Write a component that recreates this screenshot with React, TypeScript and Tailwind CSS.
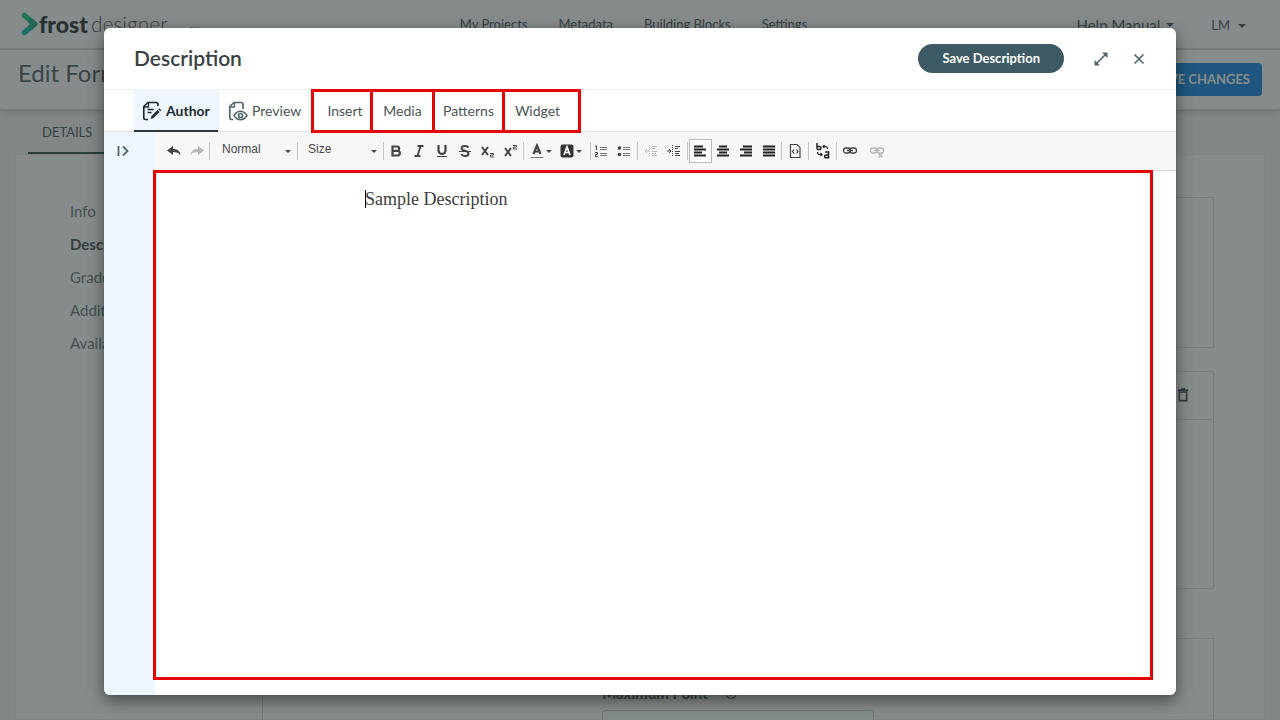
import { useState } from 'react';
import type { ReactNode } from 'react';

const NAV = ['My Projects', 'Metadata', 'Building Blocks', 'Settings'];
const SIDE = ['Info', 'Description', 'Grades', 'Additional', 'Availability'];

function Caret({ className = '' }: { className?: string }) {
  return (
    <svg viewBox="0 0 8 4" className={`shrink-0 fill-current ${className}`} aria-hidden="true">
      <path d="M0 0h8L4 4z" />
    </svg>
  );
}

/* ---------- page behind the dialog ---------- */

function Logo() {
  return (
    <a href="#home" className="flex items-center text-[#5c6467]" aria-label="frost designer">
      <svg viewBox="0 0 18 24" className="h-6 w-[18px]" aria-hidden="true">
        <path d="M3.5 3.5 13.5 12" stroke="#3fd08d" strokeWidth="5.5" strokeLinecap="round" />
        <path d="M13.5 12 3.5 20.5" stroke="#2fc3bd" strokeWidth="5.5" strokeLinecap="round" />
        <path d="m9 8.2 4.5 3.8L9 15.8" fill="none" stroke="#35b490" strokeWidth="5.5" strokeLinejoin="round" />
      </svg>
      <span className="text-[23px] leading-6 font-black text-[#42494c]">frost</span>
      <span className="ml-[3px] text-[21px] leading-6 font-light">designer</span>
    </a>
  );
}

function TopBar() {
  return (
    <header className="flex h-[50px] shrink-0 items-center border-b-2 border-[#dadcdc] bg-white pr-[34px] pl-[21px] text-[#5d6a70]">
      <div className="flex flex-1 items-center">
        <Logo />
        <span className="ml-[22px] text-sm">...</span>
      </div>
      <nav className="flex gap-[31px] pt-[2px] text-[13px]">
        {NAV.map((n) => (
          <a key={n} href="#nav">{n}</a>
        ))}
      </nav>
      <div className="flex flex-1 items-center justify-end">
        <button className="flex items-center gap-[6px] pt-[2px] text-[15px]">
          Help Manual <Caret className="h-1 w-2" />
        </button>
        <button className="ml-[37px] flex items-center gap-2 pt-1 text-[13px]">
          LM <Caret className="h-1 w-2" />
        </button>
      </div>
    </header>
  );
}

function BackPage() {
  return (
    <div className="flex h-screen flex-col overflow-hidden bg-[#f3f5f5]">
      <TopBar />
      <div className="flex h-[60px] shrink-0 items-center justify-between border-b border-[#d8dada] bg-white pr-[18px] pl-[18px] shadow-md">
        <h1 className="pb-[14px] text-2xl text-[#657074]">Edit Form</h1>
        <button className="h-[33px] rounded-sm bg-[#3192e6] px-3 text-[13px] font-bold text-white">SAVE CHANGES</button>
      </div>
      <div className="flex h-11 shrink-0 pl-7">
        <button className="h-full border-b-2 border-[#4e5c5f] px-[14px] pt-1 text-[13px] text-[#5d6a70]">DETAILS</button>
        <div className="w-20 border-b-2 border-[#4e5c5f]" />
      </div>
      <div className="mx-[15px] flex min-h-0 flex-1 border border-[#eceeee] bg-white">
        <aside className="w-[246px] shrink-0 pt-10 pl-[54px]">
          <ul className="text-[15px] text-[#7a8688]">
            {SIDE.map((s) => (
              <li key={s} className="flex h-[33px] items-center">
                <a href="#section" className={s === 'Description' ? 'font-bold text-[#5c6668]' : ''}>{s}</a>
              </li>
            ))}
          </ul>
        </aside>
        <div className="flex-1 pt-[42px] pr-[50px]">
          <div className="h-[151px] border border-[#dde0e0]" />
          <div className="mt-[23px] h-[218px] border border-[#dde0e0]">
            <div className="flex h-12 items-center justify-end border-b border-[#dde0e0] pr-6">
              <button aria-label="Delete" className="text-[#4e6066]">
                <svg viewBox="0 0 12 14" className="mb-[2px] h-[14px] w-3" fill="none" stroke="currentColor" strokeWidth="1.6">
                  <path d="M2.3 4h7.4v8.6H2.3zM1 2.1h10M4 1h4" />
                </svg>
              </button>
            </div>
          </div>
          <div className="mt-[49px] h-[218px] border border-[#dde0e0] pt-11 pl-[339px]">
            <label htmlFor="max-point" className="flex h-5 items-center text-[15px] font-bold text-[#5c6a6c]">
              Maximum Point
              <svg viewBox="0 0 14 14" className="ml-4 h-[14px] w-[14px]" fill="none" stroke="currentColor" strokeWidth="1.2" aria-hidden="true">
                <circle cx="7" cy="7" r="5.5" />
                <path d="M7 4v4M7 9v1" />
              </svg>
            </label>
            <input id="max-point" className="mt-[7px] h-9 w-[272px] rounded border border-[#cbd0d0] bg-[#f9fdfb]" />
          </div>
        </div>
      </div>
    </div>
  );
}

/* ---------- toolbar ---------- */

function Icon({ children, className = '' }: { children: ReactNode; className?: string }) {
  return (
    <svg viewBox="0 0 16 16" className={`h-4 w-4 shrink-0 ${className}`} fill="none" stroke="currentColor" aria-hidden="true">
      {children}
    </svg>
  );
}

function Tool({ label, off, active, children }: { label: string; off?: boolean; active?: boolean; children: ReactNode }) {
  return (
    <button
      aria-label={label}
      disabled={off}
      className={`flex h-6 w-[23px] shrink-0 items-center justify-center ${
        active ? 'border border-[#bcbcbc] bg-white' : ''
      } ${off ? 'opacity-35' : ''}`}
    >
      {children}
    </button>
  );
}

function Group({ className = '', children }: { className?: string; children: ReactNode }) {
  return <div className={`flex h-[18px] shrink-0 items-center justify-center border-r border-[#c4c4c4] ${className}`}>{children}</div>;
}

function ColorTool({ label, children }: { label: string; children: ReactNode }) {
  return (
    <button aria-label={label} className="flex h-6 w-[30px] items-center gap-px pl-[2px]">
      {children}
      <Caret className="h-[3px] w-[6px]" />
    </button>
  );
}

function ToolSelect({ label, value }: { label: string; value: string }) {
  return (
    <div className="flex w-full items-center pr-[6px] pl-[10px]">
      <select aria-label={label} className="mb-1 w-full appearance-none bg-transparent font-['Liberation_Sans',Arial,sans-serif] text-xs text-[#484848]">
        <option>{value}</option>
      </select>
      <Caret className="h-[3px] w-[6px]" />
    </div>
  );
}

const ALIGN = [
  { label: 'Align left', d: 'M2 3.5h9M2 6.5h12M2 9.5h8M2 12.5h12' },
  { label: 'Center', d: 'M4 3.5h8M2 6.5h12M4 9.5h8M2 12.5h12' },
  { label: 'Align right', d: 'M5 3.5h9M2 6.5h12M6 9.5h8M2 12.5h12' },
  { label: 'Justify', d: 'M2 3.5h12M2 6.5h12M2 9.5h12M2 12.5h12' },
];

const CHAIN = (
  <>
    <rect x="1.5" y="5" width="7" height="5" rx="2.5" strokeWidth="1.3" />
    <rect x="7.5" y="5" width="7" height="5" rx="2.5" strokeWidth="1.3" />
    <path d="M5 7.5h6" strokeWidth="1.3" />
  </>
);

function Toolbar() {
  return (
    <div role="toolbar" aria-label="Formatting" className="flex h-[39px] items-center border-b border-[#d6d6d6] bg-[#f7f7f7] pl-[7px] text-[#444]">
      <Group className="w-12">
        <Tool label="Undo">
          <Icon><path d="M1 7.5 7 3v3c4.5 0 7 2 7.5 6.5C13 10 11 9 7 9v3z" fill="currentColor" stroke="none" /></Icon>
        </Tool>
        <Tool label="Redo" off>
          <Icon><path d="M15 7.5 9 3v3c-4.5 0-7 2-7.5 6.5C3 10 5 9 9 9v3z" fill="currentColor" stroke="none" /></Icon>
        </Tool>
      </Group>
      <Group className="w-[88px] pl-[2px]"><ToolSelect label="Paragraph format" value="Normal" /></Group>
      <Group className="w-[86px]"><ToolSelect label="Font size" value="Size" /></Group>
      <Group className="w-[140px] pr-px">
        <Tool label="Bold">
          <Icon><path d="M4.5 3.5H9a2.1 2.1 0 0 1 0 4.3H4.5zM4.5 7.8h5a2.3 2.3 0 0 1 0 4.7h-5z" strokeWidth="2.2" /></Icon>
        </Tool>
        <Tool label="Italic">
          <Icon><path d="M6.5 3h6M3.5 13h6M9.6 3 6.4 13" strokeWidth="1.9" /></Icon>
        </Tool>
        <Tool label="Underline">
          <Icon><path d="M4.5 2v5.500a3.500 3.500 0 0 0 7 0V2" strokeWidth="2.2" /><path d="M3 13.500h10" /></Icon>
        </Tool>
        <Tool label="Strikethrough">
          <Icon>
            <path d="M11.5 4.6C10.800 3.400 9.500 3 8 3 6 3 4.700 4 4.700 5.400 4.700 8.500 11.500 7 11.500 10.500c0 1.600-1.500 2.500-3.500 2.500-1.700 0-3-.6-3.700-1.900" strokeWidth="2" />
            <path d="M2 8.500h12" strokeWidth="1.2" />
          </Icon>
        </Tool>
        <Tool label="Subscript">
          <Icon><path d="m2 4 6 8M8 4l-6 8" strokeWidth="2" /><path d="M10 10.500h3.500v1.500h-3v2H14" /></Icon>
        </Tool>
        <Tool label="Superscript">
          <Icon><path d="m2 5 6 8M8 5l-6 8" strokeWidth="2" /><path d="M10 2.500h3.500V4h-3v2H14" /></Icon>
        </Tool>
      </Group>
      <Group className="w-[67px]">
        <ColorTool label="Text colour">
          <Icon><path d="m4.500 11 3.500-8.500L11.500 11M6 8.500h4" strokeWidth="2.2" /><path d="M1.500 14.500h13" stroke="#777" /></Icon>
        </ColorTool>
        <ColorTool label="Background colour">
          <Icon>
            <rect x="1.500" y="1.500" width="13" height="13" rx="2" fill="#333" stroke="none" />
            <path d="m5 12 3-8 3 8M6 9.500h4" stroke="#fff" strokeWidth="1.7" />
          </Icon>
        </ColorTool>
      </Group>
      <Group className="w-[47px] pr-[3px]">
        <Tool label="Numbered list">
          <Icon><path d="M7 4.500h7M7 6.500h7M7 10.500h7M7 12.500h7" stroke="#777" /><path d="M2 3h1.500v4M2 9.500h2.500v2H2.500v2h2.500" /></Icon>
        </Tool>
        <Tool label="Bulleted list">
          <Icon><path d="M7 4.500h7M7 6.500h7M7 10.500h7M7 12.500h7" stroke="#777" /><g fill="currentColor" stroke="none"><circle cx="3.500" cy="5" r="1.800" /><circle cx="3.500" cy="11.500" r="1.800" /></g></Icon>
        </Tool>
      </Group>
      <Group className="w-[50px]">
        <Tool label="Decrease indent" off>
          <Icon><path d="M6.500 2v12" strokeDasharray="1 1" /><path d="M9 3.500h5M9 5.500h3M9 8.500h5M9 10.500h4M9 12.500h5M2 8h4M4 6 2 8l2 2" /></Icon>
        </Tool>
        <Tool label="Increase indent">
          <Icon><path d="M6.500 2v12" strokeDasharray="1 1" /><path d="M9 3.500h5M9 5.500h3M9 8.500h5M9 10.500h4M9 12.500h5M1 8h4M3 6l2 2-2 2" /></Icon>
        </Tool>
      </Group>
      <Group className="w-[94px]">
        {ALIGN.map((a, i) => (
          <Tool key={a.label} label={a.label} active={i === 0}>
            <Icon className="text-[#222]"><path d={a.d} strokeWidth="2" /></Icon>
          </Tool>
        ))}
      </Group>
      <Group className="w-[27px]">
        <Tool label="Source">
          <Icon><path d="M3.500 1.500H10l3 3v10H3.500z" strokeWidth="1.2" /><path d="M7 6.500 5.500 8.500 7 10.500M9.500 6.500l1.500 2-1.500 2" strokeWidth="1.2" /></Icon>
        </Tool>
      </Group>
      <Group className="w-[28px]">
        <Tool label="Translate">
          <Icon className="text-[#222]">
            <path d="M2 0v6.500M2 3.500h2.500a1.500 1.500 0 0 1 0 3H2" strokeWidth="1.5" />
            <path d="M10 9h3.500v6.500M13.500 12H11a1.400 1.400 0 0 0 0 2.800h2.500" strokeWidth="1.6" />
            <path d="M8 3.500h2.500q2 0 2 2.500M9.500 2 8 3.500 9.500 5M2.500 9q0 2.500 2 2.500H7M5.500 10 7 11.500 5.500 13" strokeWidth="1.2" />
          </Icon>
        </Tool>
      </Group>
      <div className="flex items-center gap-1 pl-px">
        <Tool label="Link"><Icon>{CHAIN}</Icon></Tool>
        <Tool label="Unlink" off><Icon>{CHAIN}<path d="m9.500 10.500 4 4M13.500 10.500l-4 4" strokeWidth="1.4" /></Icon></Tool>
      </div>
    </div>
  );
}

/* ---------- dialog ---------- */

function Tabs() {
  return (
    <div className="flex h-[42px] shrink-0 items-stretch border-b border-[#dfe3e5] pl-[30px] text-sm text-[#4b5558]">
      <button className="-mb-px flex w-[84px] items-center border-b-2 border-[#2b373c] bg-[#eef6ff] pt-px pl-2 font-bold text-[#1f2a2e]">
        <svg viewBox="0 0 20 20" className="mr-1 h-5 w-5 shrink-0" fill="none" stroke="currentColor" strokeWidth="1.7" aria-hidden="true">
          <path d="M16 5V3.500A2 2 0 0 0 14 1.500H6L1.800 5.500V17a1.500 1.500 0 0 0 1.500 1.500H6" />
          <path d="M6.500 1.500V6H2M5.500 8.500h6M5.500 11.500h4" strokeWidth="1.3" />
          <path d="m8.500 18 1-3 6-6 2 2-6 6z" fill="currentColor" stroke="none" />
          <path d="m16.300 8.200 1-1 2 2-1 1z" fill="currentColor" stroke="none" />
        </svg>
        Author
      </button>
      <button className="flex w-[91px] items-center border-x border-[#eceff1] pl-[9px]">
        <svg viewBox="0 0 20 20" className="mr-1 h-5 w-5 shrink-0 text-[#51656b]" fill="none" stroke="currentColor" strokeWidth="1.7" aria-hidden="true">
          <path d="M15 8V3.500A2 2 0 0 0 13 1.500H6L1.800 5.500V17a1.500 1.500 0 0 0 1.500 1.500H5" />
          <path d="M6.500 1.500V6H2" strokeWidth="1.3" />
          <path d="M6 14.500c1.800-2.800 3.900-4.200 6.500-4.200s4.700 1.400 6.500 4.200c-1.800 2.800-3.900 4.200-6.500 4.200S7.800 17.300 6 14.500z" strokeWidth="1.5" />
          <circle cx="12.500" cy="14.500" r="2" />
        </svg>
        Preview
      </button>
      {/* highlighted menus */}
      <div className="relative z-10 -mt-px -mb-[2px] ml-[2px] flex">
        <button className="w-[62px] border-[3px] border-[#e60505] pl-[6px]">Insert</button>
        <button className="-ml-[3px] w-[65px] border-[3px] border-[#e60505]">Media</button>
        <button className="-ml-[3px] w-[73px] border-[3px] border-[#e60505]">Patterns</button>
        <button className="-ml-[3px] w-[79px] border-[3px] border-[#e60505] pr-2">Widget</button>
      </div>
    </div>
  );
}

export default function App() {
  const [text, setText] = useState('Sample Description');

  return (
    <div className="relative h-screen overflow-hidden font-['Lato',sans-serif]">
      <BackPage />
      <div className="absolute inset-0 flex bg-[#0d1917]/50 px-[104px] pt-7 pb-[25px]">
        <section role="dialog" aria-label="Description" className="flex min-w-0 flex-1 flex-col overflow-hidden rounded-md bg-white shadow-[0_5px_16px_rgba(0,0,0,0.5)]">
          <div className="flex h-[62px] shrink-0 items-center border-b border-[#f1f1f1] pr-[30px] pl-[30px]">
            <h2 className="flex-1 pb-[2px] text-[21px] font-semibold text-[#3a4246]">Description</h2>
            <button className="h-[29px] rounded-full bg-[#3d5a64] px-6 text-[13px] font-bold text-white">Save Description</button>
            <button aria-label="Expand" className="ml-[30px] text-[#4c646c]">
              <svg viewBox="0 0 14 14" className="h-[14px] w-[14px]" fill="currentColor">
                <path d="M8 .5h5.500V6zM.5 8v5.500H6z" />
                <path d="m2.500 11.500 9-9" stroke="currentColor" strokeWidth="1.6" />
              </svg>
            </button>
            <button aria-label="Close" className="ml-6 text-[#4c646c]">
              <svg viewBox="0 0 14 14" className="h-[14px] w-[14px]" fill="none" stroke="currentColor" strokeWidth="1.6">
                <path d="m2.500 2.500 9 9M11.500 2.500l-9 9" />
              </svg>
            </button>
          </div>
          <Tabs />
          <div className="flex min-h-0 flex-1">
            <div className="w-[51px] shrink-0 bg-[#eef6ff] pt-[11px] pl-3">
              <button aria-label="Open panel" className="block text-[#51686f]">
                <svg viewBox="0 0 16 16" className="h-4 w-4" fill="none" stroke="currentColor" strokeWidth="1.8">
                  <path d="M2.500 3v10M7 3.500l4.500 4.500L7 12.500" />
                </svg>
              </button>
            </div>
            <div className="flex min-w-0 flex-1 flex-col">
              <Toolbar />
              <div className="relative -mt-px mr-[23px] mb-[15px] -ml-[2px] flex-1 border-[3px] border-[#e60505] bg-white pt-[10px]">
                <div className="relative mx-auto max-w-[576px]">
                  <textarea
                    aria-label="Description text"
                    value={text}
                    onChange={(e) => setText(e.target.value)}
                    className="block h-[440px] w-full resize-none font-[Georgia,'Liberation_Serif',serif] text-lg leading-8 text-[#3c3c3c] outline-none"
                  />
                  <span className="absolute top-[7px] left-0 h-[18px] w-px bg-black" />
                </div>
              </div>
            </div>
          </div>
        </section>
      </div>
    </div>
  );
}
